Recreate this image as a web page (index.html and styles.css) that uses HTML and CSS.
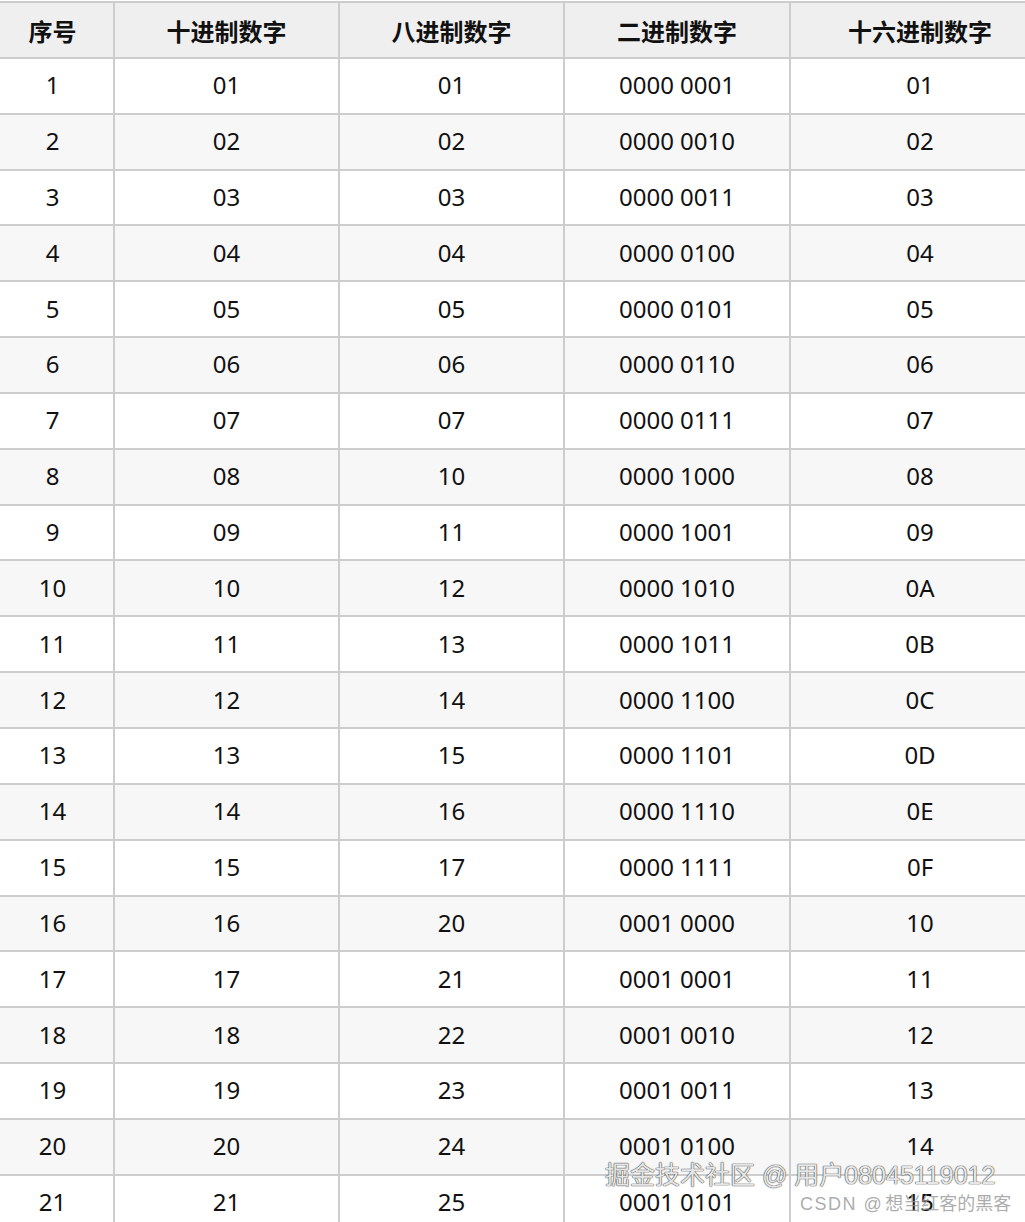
FILE: index.html
```html
<!DOCTYPE html>
<html lang="zh">
<head>
<meta charset="utf-8">
<title>进制对照表</title>
<link rel="stylesheet" href="styles.css">
</head>
<body>
<div class="page">
  <div class="table">
    <div class="cell head">序号</div><div class="cell head">十进制数字</div><div class="cell head">八进制数字</div><div class="cell head">二进制数字</div><div class="cell head">十六进制数字</div>
    <div class="cell">1</div><div class="cell">01</div><div class="cell">01</div><div class="cell">0000 0001</div><div class="cell">01</div>
    <div class="cell alt">2</div><div class="cell alt">02</div><div class="cell alt">02</div><div class="cell alt">0000 0010</div><div class="cell alt">02</div>
    <div class="cell">3</div><div class="cell">03</div><div class="cell">03</div><div class="cell">0000 0011</div><div class="cell">03</div>
    <div class="cell alt">4</div><div class="cell alt">04</div><div class="cell alt">04</div><div class="cell alt">0000 0100</div><div class="cell alt">04</div>
    <div class="cell">5</div><div class="cell">05</div><div class="cell">05</div><div class="cell">0000 0101</div><div class="cell">05</div>
    <div class="cell alt">6</div><div class="cell alt">06</div><div class="cell alt">06</div><div class="cell alt">0000 0110</div><div class="cell alt">06</div>
    <div class="cell">7</div><div class="cell">07</div><div class="cell">07</div><div class="cell">0000 0111</div><div class="cell">07</div>
    <div class="cell alt">8</div><div class="cell alt">08</div><div class="cell alt">10</div><div class="cell alt">0000 1000</div><div class="cell alt">08</div>
    <div class="cell">9</div><div class="cell">09</div><div class="cell">11</div><div class="cell">0000 1001</div><div class="cell">09</div>
    <div class="cell alt">10</div><div class="cell alt">10</div><div class="cell alt">12</div><div class="cell alt">0000 1010</div><div class="cell alt">0A</div>
    <div class="cell">11</div><div class="cell">11</div><div class="cell">13</div><div class="cell">0000 1011</div><div class="cell">0B</div>
    <div class="cell alt">12</div><div class="cell alt">12</div><div class="cell alt">14</div><div class="cell alt">0000 1100</div><div class="cell alt">0C</div>
    <div class="cell">13</div><div class="cell">13</div><div class="cell">15</div><div class="cell">0000 1101</div><div class="cell">0D</div>
    <div class="cell alt">14</div><div class="cell alt">14</div><div class="cell alt">16</div><div class="cell alt">0000 1110</div><div class="cell alt">0E</div>
    <div class="cell">15</div><div class="cell">15</div><div class="cell">17</div><div class="cell">0000 1111</div><div class="cell">0F</div>
    <div class="cell alt">16</div><div class="cell alt">16</div><div class="cell alt">20</div><div class="cell alt">0001 0000</div><div class="cell alt">10</div>
    <div class="cell">17</div><div class="cell">17</div><div class="cell">21</div><div class="cell">0001 0001</div><div class="cell">11</div>
    <div class="cell alt">18</div><div class="cell alt">18</div><div class="cell alt">22</div><div class="cell alt">0001 0010</div><div class="cell alt">12</div>
    <div class="cell">19</div><div class="cell">19</div><div class="cell">23</div><div class="cell">0001 0011</div><div class="cell">13</div>
    <div class="cell alt">20</div><div class="cell alt">20</div><div class="cell alt">24</div><div class="cell alt">0001 0100</div><div class="cell alt">14</div>
    <div class="cell">21</div><div class="cell">21</div><div class="cell">25</div><div class="cell">0001 0101</div><div class="cell">15</div>
  </div>
  <div class="wm wm-juejin">掘金技术社区 @ 用户08045119012</div>
  <div class="wm wm-csdn"><span class="wm-latin">CSDN @</span>想当红客的黑客</div>
</div>
</body>
</html>
```

FILE: styles.css
```css
html, body {
  margin: 0;
  padding: 0;
  overflow: hidden;
  background: #ffffff;
}

.page {
  position: relative;
  width: 1025px;
  height: 1222px;
  overflow: hidden;
}

.table {
  display: grid;
  grid-template-columns: 121px 223px 223px 224px 258px;
  grid-auto-rows: 53.85px;
  gap: 2px;
  margin: 1px 0 0 -8px;
  padding-top: 2px;
  width: 1057px;
  background: #cdcdcd;
  font-family: "Noto Sans", "Noto Sans CJK SC", sans-serif;
  font-size: 24px;
  color: #111111;
}

.cell {
  display: flex;
  align-items: center;
  justify-content: center;
  background: #ffffff;
  line-height: 1;
  padding-bottom: 1px;
}

.cell.alt {
  background: #f7f7f7;
}

.cell.head {
  background: #efefef;
  font-family: "Noto Sans CJK SC", sans-serif;
  font-weight: 700;
  color: #111111;
  padding-top: 2px;
  padding-bottom: 0;
}

.wm {
  position: absolute;
  white-space: nowrap;
  line-height: 1;
}

.wm-juejin {
  left: 605px;
  top: 1163px;
  font-family: "Liberation Sans", "Noto Sans CJK SC", sans-serif;
  font-size: 25px;
  color: rgba(255, 255, 255, 0.9);
  text-shadow: 0 0 1px rgba(60, 60, 60, 0.95), 0 0 1px rgba(60, 60, 60, 0.95), 0 0 1px rgba(60, 60, 60, 0.6);
}

.wm-csdn {
  left: 800px;
  top: 1193px;
  font-family: "Noto Sans CJK SC", sans-serif;
  font-size: 18px;
  color: rgba(150, 150, 150, 0.8);
}

.wm-latin {
  font-family: "Liberation Sans", sans-serif;
  letter-spacing: 1.5px;
  margin-right: 2px;
}
```
